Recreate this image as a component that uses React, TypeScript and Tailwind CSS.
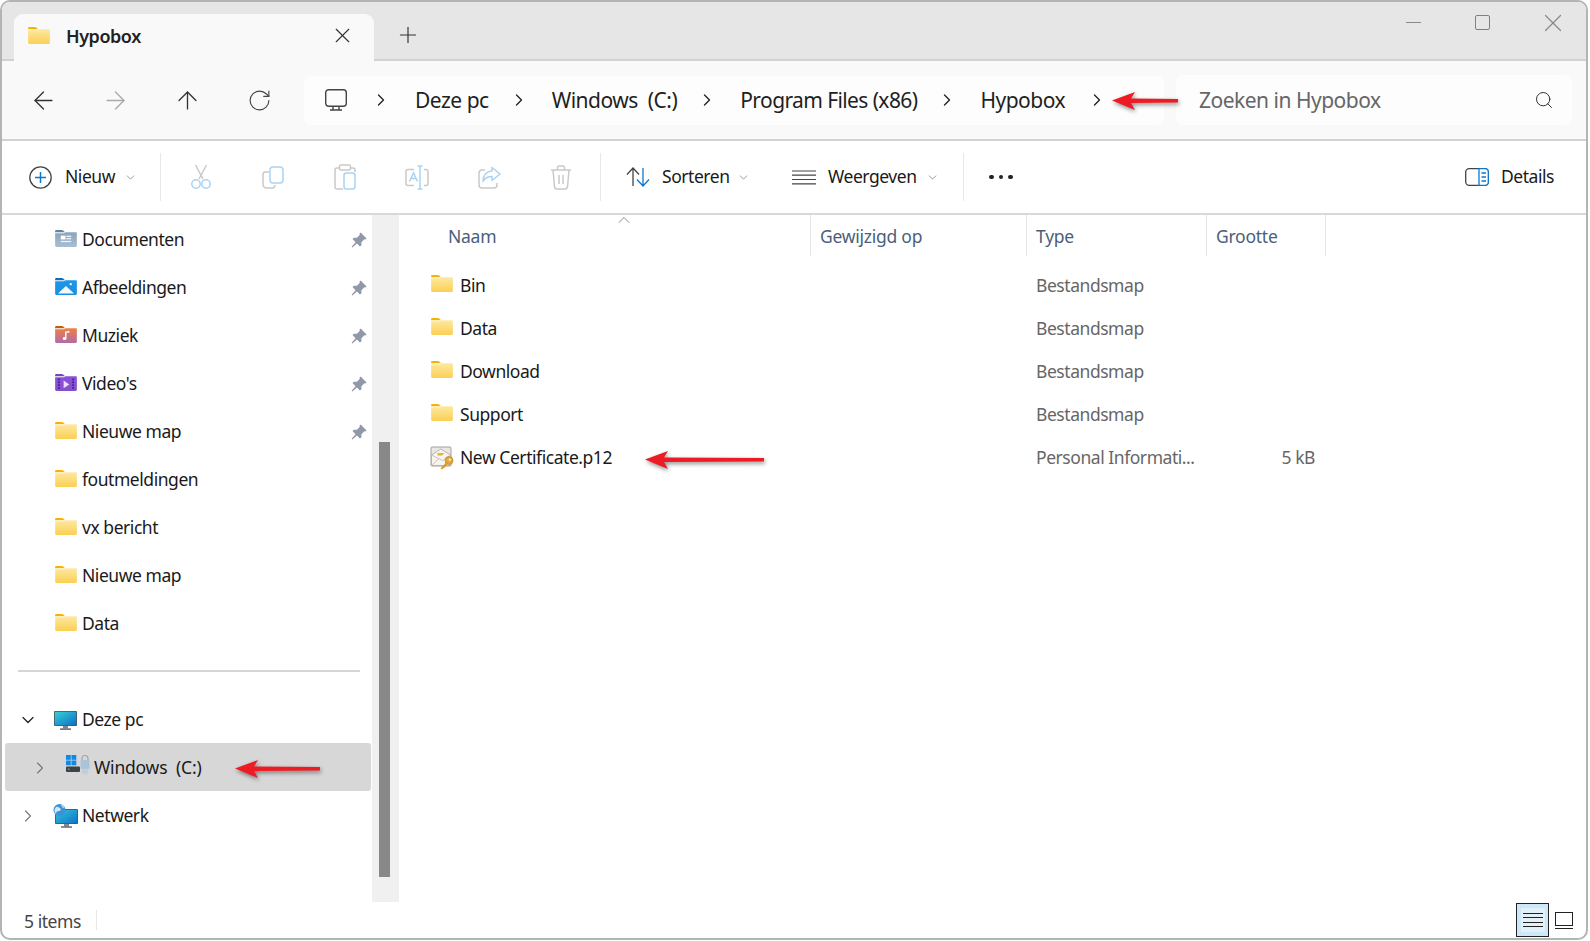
import { useId, type ReactNode } from "react";
import { ArrowLeft, ArrowRight, ArrowUp, ChevronDown, ChevronRight, ChevronUp, Plus, RotateCw, Search, X } from "lucide-react";

const FONT = "font-['Noto_Sans','Open_Sans',sans-serif]";

// Folder with a darker tab and a gradient body; children draw the glyph on top
const Folder = ({ tab = "#f5b400", from = "#fde9a0", to = "#fbcf55", children }: { tab?: string; from?: string; to?: string; children?: ReactNode }) => {
  const id = useId();
  return (
    <svg width="22" height="17" viewBox="0 0 23 18" className="shrink-0">
      <defs>
        <linearGradient id={id} x1="0" y1="0" x2="0" y2="1">
          <stop offset="0" stopColor={from} />
          <stop offset="1" stopColor={to} />
        </linearGradient>
      </defs>
      <path d="M0 1.2C0 .5.5 0 1.2 0h6c.5 0 .9.2 1.3.5L10.500 2.500H0z" fill={tab} />
      <path d="M0 3.500h9.500L11 2.300h10.800c.7 0 1.200.5 1.200 1.200v13.300c0 .7-.5 1.200-1.200 1.200H1.200C.5 18 0 17.500 0 16.800z" fill={`url(#${id})`} />
      {children}
    </svg>
  );
};

const DocsFolder = () => (
  <Folder tab="#6a8299" from="#8aa4bf" to="#a9bed3">
    <rect x="6" y="6" width="5" height="4" fill="#fff" />
    <rect x="12" y="6" width="5" height="1.400" fill="#eef3f8" />
    <rect x="12" y="8.500" width="5" height="1.400" fill="#eef3f8" />
    <rect x="6" y="11.500" width="11" height="1.400" fill="#eef3f8" />
  </Folder>
);

const PicturesFolder = () => (
  <Folder tab="#0b6cc4" from="#1b97ea" to="#1b8fe0">
    <path d="M3 16.500 11.500 8.500 20 16.500z" fill="#f2f8fc" />
    <circle cx="16.500" cy="6.500" r="1.200" fill="#fff" />
  </Folder>
);

const MusicFolder = () => (
  <Folder tab="#bb5f10" from="#f27f44" to="#b06ba8">
    <path d="M12 7v6.200a2 1.600 0 1 1-1.500-1.500V6l4.500-.9v2z" fill="#fff" />
  </Folder>
);

const VideoFolder = () => (
  <Folder tab="#6f4ab5" from="#8c4fdc" to="#8350c8">
    <path d="M9 7v8l6-4z" fill="#e8dcff" />
    {[5, 8, 11, 14].map((y) => (
      <g key={y} fill="#3d1f80">
        <rect x="3" y={y} width="2" height="1.600" />
        <rect x="18" y={y} width="2" height="1.600" />
      </g>
    ))}
  </Folder>
);

const PcIcon = () => {
  const id = useId();
  return (
    <svg width="23" height="19" viewBox="0 0 23 19" className="shrink-0">
      <defs>
        <linearGradient id={id} x1="0" y1="0" x2="1" y2="1">
          <stop offset="0" stopColor="#35d0d6" />
          <stop offset="1" stopColor="#0d6fc6" />
        </linearGradient>
      </defs>
      <rect x="0" y="0" width="23" height="15" rx="1" fill="#4a5560" />
      <rect x=".8" y=".8" width="21.400" height="13.400" fill={`url(#${id})`} />
      <rect x="9" y="15" width="5" height="2.500" fill="#7d868e" />
      <rect x="6" y="17.400" width="11" height="1.400" fill="#555d65" />
    </svg>
  );
};

const DriveIcon = () => (
  <svg width="24" height="20" viewBox="0 0 24 20" className="shrink-0">
    <g fill="#0f8ae6">
      <rect x="0" y="0" width="4.800" height="4.800" />
      <rect x="5.500" y="0" width="4.800" height="4.800" />
      <rect x="0" y="5.500" width="4.800" height="4.800" />
      <rect x="5.500" y="5.500" width="4.800" height="4.800" />
    </g>
    <rect x="0" y="11.500" width="14" height="5.500" rx="1" fill="#3e4347" />
    <rect x="2" y="13.600" width="1.500" height="1.200" fill="#55d06a" />
    <path d="M16 5V3.500a3 3 0 0 1 6 0V5" fill="none" stroke="#9aa7b2" strokeWidth="1.200" />
    <rect x="14.500" y="5" width="9" height="9" rx="1" fill="#a9c4da" />
    <ellipse cx="19" cy="16.500" rx="3.200" ry="3" fill="#c5cdd4" />
  </svg>
);

const NetworkIcon = () => {
  const id = useId();
  return (
    <svg width="25" height="24" viewBox="0 0 25 24" className="shrink-0">
      <defs>
        <linearGradient id={id} x1="0" y1="0" x2="1" y2="1">
          <stop offset="0" stopColor="#35c4dc" />
          <stop offset="1" stopColor="#0d74c8" />
        </linearGradient>
      </defs>
      <rect x="2" y="5" width="23" height="15" rx="1" fill="#4a5560" />
      <rect x="2.800" y="5.800" width="21.400" height="13.400" fill={`url(#${id})`} />
      <rect x="11" y="20" width="5" height="2.400" fill="#7d868e" />
      <rect x="8" y="22.300" width="11" height="1.400" fill="#555d65" />
      <circle cx="6.500" cy="6" r="6" fill="#3a93d6" />
      <path d="M3 3c2-1 3 .5 4 1s1 3-1 3-3 1-3 3c-2-2-2-5 0-7z" fill="#d2e8f6" />
      <path d="M8 .5c2 .5 3 2 3.500 3.500-1.500 0-3-1-3.500-3.500z" fill="#d2e8f6" />
    </svg>
  );
};

const CertIcon = () => (
  <svg width="24" height="24" viewBox="0 0 24 24" className="shrink-0">
    <rect x="1" y="1" width="20" height="19" rx="1" fill="#e9e7e1" stroke="#a0a0a0" />
    <path d="M1.500 9 11 3l9.500 6v10.500h-19z" fill="#f6f4ed" stroke="#aaa8a2" strokeWidth=".8" />
    <path d="M1.500 19.500 9 12.500M20.500 9l-8 5.500-11-5.500" fill="none" stroke="#bdbab0" strokeWidth=".8" />
    <path d="M7.500 7h7l-2.500 2.500H7.500z" fill="#e2b341" />
    <circle cx="19" cy="14.500" r="4" fill="#e3a93a" stroke="#a87a20" strokeWidth=".6" />
    <circle cx="19.800" cy="13.700" r="1.100" fill="#f8f6ef" />
    <path d="M16.500 16 10.500 22.500l1.500 1 1.500-1.500 1 .3.400-1.800 1.600-.3.300-1.500 1.700-1.200z" fill="#d89a2c" />
  </svg>
);

const Pin = () => (
  <svg width="16" height="16" viewBox="0 0 16 16" className="shrink-0">
    <path d="M9.600.4 15.600 6.400 14.400 7.600 13.400 7.200 10.400 10.200 10.400 13.200 9 14.600 5.900 11.500 1.400 15.600.6 14.800 4.600 10.200 1.500 7.100 2.900 5.700 5.900 5.700 8.900 2.700 8.500 1.600z" fill="#8f9aa6" />
  </svg>
);

const BLUE = "#a9d3f3";
const GREY = "#c9c9c9";

const CutIcon = () => (
  <svg width="22" height="26" viewBox="0 0 22 26" fill="none" strokeWidth="1.500" className="shrink-0">
    <path d="M16.500 1 9 15M5.500 1 13 15" stroke={GREY} />
    <circle cx="6" cy="20" r="4.200" stroke={BLUE} />
    <circle cx="16" cy="20" r="4.200" stroke={BLUE} />
  </svg>
);

const CopyIcon = () => (
  <svg width="22" height="23" viewBox="0 0 22 23" fill="none" strokeWidth="1.500" className="shrink-0">
    <path d="M7 6H3.500A2.500 2.500 0 0 0 1 8.500v10A3.500 3.500 0 0 0 4.500 22h6a2.500 2.500 0 0 0 2.500-2.500V19" stroke={GREY} />
    <rect x="8" y="1" width="13" height="16" rx="3" stroke={BLUE} />
  </svg>
);

const PasteIcon = () => (
  <svg width="22" height="26" viewBox="0 0 22 26" fill="none" strokeWidth="1.500" className="shrink-0">
    <path d="M5 4H3a2 2 0 0 0-2 2v17a2 2 0 0 0 2 2h6M17 4h2a2 2 0 0 1 2 2v2" stroke={GREY} />
    <rect x="5.500" y="1" width="11" height="5" rx="1.500" stroke={GREY} />
    <rect x="10" y="9" width="11" height="16" rx="2.500" stroke={BLUE} />
  </svg>
);

const RenameIcon = () => (
  <svg width="24" height="25" viewBox="0 0 24 25" fill="none" strokeWidth="1.500" className="shrink-0">
    <path d="M9 4.500H3a2 2 0 0 0-2 2v12a2 2 0 0 0 2 2h6M19 4.500h2a2 2 0 0 1 2 2v12a2 2 0 0 1-2 2h-2" stroke={GREY} />
    <path d="M4.500 16.500 8.500 8l4 8.500M6 13.500h5" stroke={BLUE} />
    <path d="M12.500 1h5M15 1v23M12.500 24h5" stroke={BLUE} />
  </svg>
);

const ShareIcon = () => (
  <svg width="23" height="23" viewBox="0 0 23 23" fill="none" strokeWidth="1.500" className="shrink-0">
    <path d="M7 4H4a3 3 0 0 0-3 3v12a3 3 0 0 0 3 3h12a3 3 0 0 0 3-3v-2" stroke={GREY} />
    <path d="M14 1.500 22 8l-8 6.500v-4c-4 0-7 1-9 5 0-6 3-10 9-10.500z" stroke={BLUE} strokeLinejoin="round" />
  </svg>
);

const TrashIcon = () => (
  <svg width="22" height="25" viewBox="0 0 22 25" fill="none" stroke={GREY} strokeWidth="1.500" className="shrink-0">
    <path d="M1 5h20M7.500 5V3a2 2 0 0 1 2-2h3a2 2 0 0 1 2 2v2" />
    <path d="M3 5l1.500 17a2.500 2.500 0 0 0 2.500 2h8a2.500 2.500 0 0 0 2.500-2L19 5" />
    <path d="M9 10v9M13 10v9" />
  </svg>
);

const NewIcon = () => (
  <svg width="23" height="23" viewBox="0 0 23 23" fill="none" className="shrink-0">
    <circle cx="11.500" cy="11.500" r="10.700" stroke="#444" strokeWidth="1.300" />
    <path d="M11.500 6v11M6 11.500h11" stroke="#0b78d0" strokeWidth="1.500" />
  </svg>
);

const SortIcon = () => (
  <svg width="24" height="20" viewBox="0 0 24 20" fill="none" strokeWidth="1.300" className="shrink-0">
    <path d="M1 7.500 7 1l6 6.500M7 1v18" stroke="#444" />
    <path d="M11 12.500 17 19l6-6.500M17 19V1" stroke="#0b78d0" />
  </svg>
);

const LinesIcon = () => (
  <svg width="24" height="15" viewBox="0 0 24 15" stroke="#444" strokeWidth="1.200" className="shrink-0">
    <path d="M0 1h24M0 5.200h24M0 9.500h24M0 13.800h24" />
  </svg>
);

const DetailsIcon = () => (
  <svg width="24" height="18" viewBox="0 0 24 18" fill="none" className="shrink-0">
    <rect x=".7" y=".7" width="22.600" height="16.600" rx="3.500" stroke="#444" strokeWidth="1.300" />
    <path d="M14 .7h6a3.300 3.300 0 0 1 3.300 3.300v10a3.300 3.300 0 0 1-3.300 3.300h-6z" fill="#fff" stroke="#0b78d0" strokeWidth="1.300" />
    <path d="M16.500 5h4.500M16.500 9h4.500M16.500 13h4.500" stroke="#0b78d0" strokeWidth="1.300" />
  </svg>
);

const DesktopGlyph = () => (
  <svg width="22" height="22" viewBox="0 0 22 22" fill="none" stroke="#444" strokeWidth="1.400" className="shrink-0">
    <rect x=".7" y=".7" width="20.600" height="16.600" rx="3" />
    <path d="M8 17.500v3.500M14 17.500v3.500M5 21h12" />
  </svg>
);

// Red annotation arrow, the head stays the same size whatever the length
const RedArrow = ({ length, className = "" }: { length: number; className?: string }) => (
  <svg
    width={length}
    height="20"
    viewBox={`0 0 ${length} 20`}
    className={`shrink-0 overflow-visible drop-shadow-[1px_2px_2px_rgba(0,0,0,0.45)] ${className}`}
  >
    <path
      d={`M0 9.500 L23 1 L19 7.500 L${length} 8 L${length} 11.500 L19 12 L23 19 Z`}
      fill="#ed1c24"
    />
  </svg>
);

const Sep = ({ className = "" }: { className?: string }) => <div className={`w-px h-[48px] bg-[#e8e8e8] shrink-0 ${className}`} />;

const Crumb = ({ label, className = "tracking-[-0.5px]" }: { label: string; className?: string }) => (
  <>
    <span className={`text-[#1f1f1f] text-[21px] whitespace-pre ${className}`}>{label}</span>
    <ChevronRight size={20} strokeWidth={1.6} className="ml-[20px] mr-[23px] shrink-0 text-[#222]" />
  </>
);

const NavButton = ({ children }: { children: ReactNode }) => <div className="w-[72px] flex justify-center shrink-0">{children}</div>;

const ToolButton = ({ children }: { children: ReactNode }) => <div className="w-[72px] flex justify-center shrink-0">{children}</div>;

const quickAccess = [
  { name: "Documenten", icon: <DocsFolder />, pinned: true },
  { name: "Afbeeldingen", icon: <PicturesFolder />, pinned: true },
  { name: "Muziek", icon: <MusicFolder />, pinned: true },
  { name: "Video's", icon: <VideoFolder />, pinned: true },
  { name: "Nieuwe map", icon: <Folder />, pinned: true },
  { name: "foutmeldingen", icon: <Folder />, pinned: false },
  { name: "vx bericht", icon: <Folder />, pinned: false },
  { name: "Nieuwe map", icon: <Folder />, pinned: false },
  { name: "Data", icon: <Folder />, pinned: false },
];

const files = ["Bin", "Data", "Download", "Support"];

const columns = "grid grid-cols-[411px_216px_180px_120px]";

export default function App() {
  return (
    <div className={`w-[1590px] h-[941px] bg-white overflow-hidden ${FONT}`}>
      <div className="w-[1588px] h-[940px] flex flex-col bg-white border-2 border-[#b4b4b4] rounded-[10px] overflow-hidden text-[17.5px] leading-none tracking-[-0.45px] text-[#1a1a1a]">
        {/* tab strip */}
        <div className="h-[59px] shrink-0 bg-[#e6e6e6] border-b-2 border-[#d2d2d2] flex items-end pl-[12px]">
          <div className="w-[360px] h-[47px] -mb-[2px] bg-[#f9f9f9] rounded-t-[9px] flex items-center pl-[14px] pr-[19px] pb-[4px]">
            <Folder />
            <span className="ml-[16px] text-[18px] font-semibold text-[#222]">Hypobox</span>
            <X size={25} strokeWidth={1.1} className="ml-auto text-[#333]" />
          </div>
          <Plus size={26} strokeWidth={1.1} className="ml-[21px] mb-[11px] text-[#333]" />
          <div className="ml-auto self-start flex items-center h-[41px] text-[#8a8a8a]">
            <div className="w-[69px] flex justify-center">
              <div className="w-[15px] h-[1.500px] bg-[#8a8a8a]" />
            </div>
            <div className="w-[69px] flex justify-center">
              <div className="w-[15px] h-[15px] border-[1.500px] border-[#808080] rounded-[2px]" />
            </div>
            <div className="w-[69px] flex justify-center translate-x-[1px]">
              <X size={30} strokeWidth={1} />
            </div>
          </div>
        </div>

        {/* navigation row */}
        <div className="h-[80px] shrink-0 bg-[#f9f9f9] border-b-2 border-[#d2d2d2] flex items-center pl-[5px]">
          <NavButton>
            <ArrowLeft size={29} strokeWidth={1.1} className="text-[#333]" />
          </NavButton>
          <NavButton>
            <ArrowRight size={29} strokeWidth={1.1} className="text-[#aaa]" />
          </NavButton>
          <NavButton>
            <ArrowUp size={29} strokeWidth={1.1} className="text-[#333]" />
          </NavButton>
          <NavButton>
            <RotateCw size={25} strokeWidth={1.1} className="text-[#444]" />
          </NavButton>
          <div className="ml-[9px] w-[860px] h-[49px] shrink-0 bg-[#fdfdfd] rounded-[7px] flex items-center pl-[21px]">
            <DesktopGlyph />
            <ChevronRight size={20} strokeWidth={1.6} className="ml-[24px] mr-[24px] shrink-0 text-[#222]" />
            <Crumb label="Deze pc" />
            <Crumb label="Windows  (C:)" />
            <Crumb label="Program Files (x86)" className="tracking-[-0.6px]" />
            <span className="text-[#1f1f1f] text-[21px] tracking-[-0.5px]">Hypobox</span>
            <ChevronRight size={20} strokeWidth={1.6} className="ml-[22px] shrink-0 text-[#222]" />
            <RedArrow length={66} className="ml-[5px] mt-[2px] relative z-10" />
          </div>
          <div className="ml-[12px] w-[396px] h-[50px] shrink-0 bg-[#fdfdfd] rounded-[7px] flex items-center pl-[23px] pr-[18px]">
            <span className="text-[21px] text-[#666] tracking-[-0.5px]">Zoeken in Hypobox</span>
            <Search size={20} strokeWidth={1.2} className="ml-auto text-[#333]" />
          </div>
        </div>

        {/* command bar */}
        <div className="h-[74px] shrink-0 bg-white border-b-2 border-[#d8d8d8] flex items-center pl-[27px]">
          <NewIcon />
          <span className="ml-[13px] w-[51px]">Nieuw</span>
          <ChevronDown size={13} strokeWidth={1.2} className="ml-[8px] text-[#666]" />
          <Sep className="ml-[23px]" />
          <div className="flex items-center ml-[4px]">
            <ToolButton><CutIcon /></ToolButton>
            <ToolButton><CopyIcon /></ToolButton>
            <ToolButton><PasteIcon /></ToolButton>
            <ToolButton><RenameIcon /></ToolButton>
            <ToolButton><ShareIcon /></ToolButton>
            <ToolButton><TrashIcon /></ToolButton>
          </div>
          <Sep className="ml-[3px]" />
          <div className="ml-[25px]"><SortIcon /></div>
          <span className="ml-[12px] w-[68px]">Sorteren</span>
          <ChevronDown size={13} strokeWidth={1.2} className="ml-[7px] text-[#666]" />
          <div className="ml-[42px]"><LinesIcon /></div>
          <span className="ml-[12px] w-[90px]">Weergeven</span>
          <ChevronDown size={13} strokeWidth={1.2} className="ml-[8px] text-[#666]" />
          <Sep className="ml-[24px]" />
          <div className="ml-[25px] flex gap-[5px]">
            <div className="w-[4.500px] h-[4.500px] rounded-full bg-[#222]" />
            <div className="w-[4.500px] h-[4.500px] rounded-full bg-[#222]" />
            <div className="w-[4.500px] h-[4.500px] rounded-full bg-[#222]" />
          </div>
          <div className="ml-auto flex items-center pr-[32px]">
            <DetailsIcon />
            <span className="ml-[12px] w-[53px]">Details</span>
          </div>
        </div>

        {/* sidebar + file list */}
        <div className="flex-1 min-h-0 flex">
          <div className="w-[370px] shrink-0 overflow-hidden">
            <div>
              {quickAccess.map((item, i) => (
                <div key={i} className="h-[48px] flex items-center pl-[52px] pr-[5px] pt-[2px]">
                  <div className="w-[23px] flex justify-center shrink-0 mb-[3px]">{item.icon}</div>
                  <span className="ml-[5px]">{item.name}</span>
                  {item.pinned && <div className="ml-auto"><Pin /></div>}
                </div>
              ))}
            </div>
            <div className="mt-[23px] mx-[16px] h-[2px] w-[342px] bg-[#d6d6d6]" />
            <div className="mt-[23px]">
              <div className="h-[48px] flex items-center pl-[16px] pt-[2px]">
                <ChevronDown size={20} strokeWidth={1.5} className="text-[#222]" />
                <div className="ml-[16px]"><PcIcon /></div>
                <span className="ml-[5px]">Deze pc</span>
              </div>
              <div className="h-[48px] ml-[3px] mr-[1px] bg-[#d7d7d7] rounded-[3px] flex items-center pl-[25px] pt-[2px]">
                <ChevronRight size={20} strokeWidth={1.3} className="text-[#777]" />
                <div className="ml-[16px] mb-[6px]"><DriveIcon /></div>
                <span className="ml-[4px] whitespace-pre tracking-[-0.2px]">Windows  (C:)</span>
                <RedArrow length={85} className="ml-[33px] mt-[2px]" />
              </div>
              <div className="h-[48px] flex items-center pl-[16px] pt-[2px]">
                <ChevronRight size={20} strokeWidth={1.3} className="text-[#777]" />
                <div className="ml-[15px]"><NetworkIcon /></div>
                <span className="ml-[4px]">Netwerk</span>
              </div>
            </div>
          </div>

          {/* sidebar scrollbar */}
          <div className="w-[26px] shrink-0 bg-[#f0f0f0] pt-[227px] pb-[25px] pl-[7px]">
            <div className="w-[11px] h-full bg-[#888]" />
          </div>

          <div className="flex-1 min-w-0 border-l border-[#efefef]">
            <div className={`${columns} h-[41px] items-stretch text-[#4a5f7c] tracking-[-0.25px] relative`}>
              <div className="flex items-center pl-[49px] pt-[2px]">Naam</div>
              <div className="flex items-center pl-[9px] pt-[2px] border-l border-[#e5e5e5]">Gewijzigd op</div>
              <div className="flex items-center pl-[9px] pt-[2px] border-l border-[#e5e5e5]">Type</div>
              <div className="flex items-center pl-[9px] pt-[2px] border-x border-[#e5e5e5]">Grootte</div>
              <ChevronUp size={20} strokeWidth={0.9} className="absolute left-[215px] -top-[5px] text-[#666]" />
            </div>
            <div className="mt-[8px]">
              {files.map((name) => (
                <div key={name} className={`${columns} h-[43px] items-center`}>
                  <div className="flex items-center pl-[32px]">
                    <div className="mb-[4px]"><Folder /></div>
                    <span className="ml-[7px]">{name}</span>
                  </div>
                  <div />
                  <div className="pl-[10px] text-[#666]">Bestandsmap</div>
                </div>
              ))}
              <div className={`${columns} h-[43px] items-center`}>
                <div className="flex items-center pl-[31px]">
                  <CertIcon />
                  <span className="ml-[6px]">New Certificate.p12</span>
                  <RedArrow length={119} className="ml-[33px] mt-[4px]" />
                </div>
                <div />
                <div className="pl-[10px] text-[#666] whitespace-nowrap">Personal Informati...</div>
                <div className="text-right pr-[11px] text-[#666]">5 kB</div>
              </div>
            </div>
          </div>
        </div>

        {/* status bar */}
        <div className="h-[36px] shrink-0 flex items-center pl-[22px] pr-[13px] text-[#444]">
          <span className="mt-[4px]">5 items</span>
          <div className="ml-[15px] w-px h-[20px] bg-[#e8e8e8]" />
          <div className="ml-auto w-[33px] h-[34px] bg-[#cce8f9] border border-[#222] flex items-center justify-center">
            <div className="w-[24px] h-[24px] bg-[#e3f0f8] flex flex-col justify-center gap-[3.500px] px-[2px]">
              <div className="h-px bg-[#222]" />
              <div className="h-px bg-[#222]" />
              <div className="h-px bg-[#222]" />
              <div className="h-px bg-[#222]" />
            </div>
          </div>
          <div className="ml-[6px] w-[18px] flex flex-col gap-[2px]">
            <div className="h-[14px] border border-[#222]" />
            <div className="h-px bg-[#222]" />
          </div>
        </div>
      </div>
    </div>
  );
}
